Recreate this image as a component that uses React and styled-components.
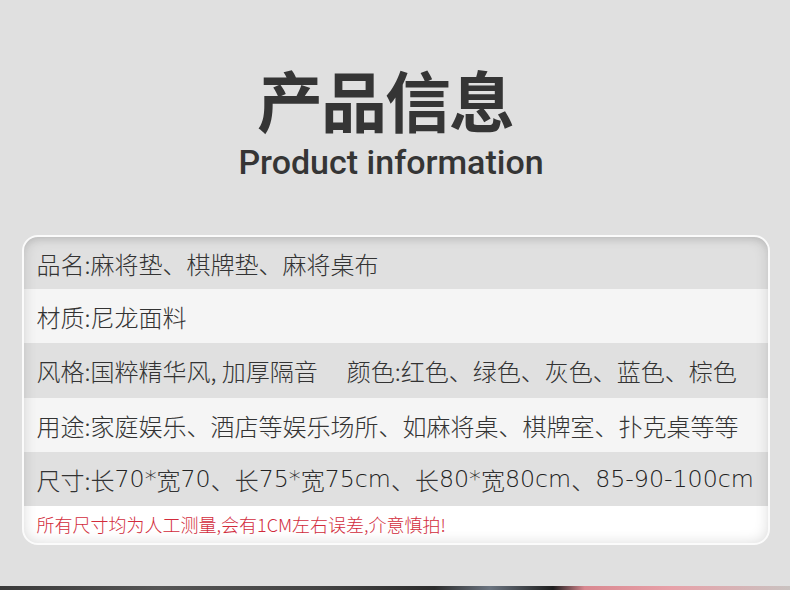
import styled, { createGlobalStyle } from 'styled-components'

const GlobalStyle = createGlobalStyle`
    html, body {
        margin: 0;
        padding: 0;
        background: #e0e0e0;
    }
`

const Page = styled.div`
    width: 790px;
    height: 590px;
    background: #e0e0e0;
    display: flex;
    flex-direction: column;
    align-items: center;
    overflow: hidden;
    font-family: "Noto Sans CJK SC", "Liberation Sans", sans-serif;
`

const Header = styled.header`
    display: flex;
    flex-direction: column;
    align-items: center;
    padding-top: 61px;
    height: 235px;
    flex-shrink: 0;
    box-sizing: border-box;
    width: 100%;
    margin-left: -8px;
`

const Title = styled.h1`
    margin: 0 12px 0 0;
    font-size: 66px;
    line-height: 74px;
    font-weight: 700;
    color: #353535;
    letter-spacing: -2px;
`

const Subtitle = styled.div`
    font-family: Roboto, "Liberation Sans", sans-serif;
    font-size: 34px;
    font-weight: 500;
    line-height: 36px;
    color: #353535;
    margin-top: 9px;
`

const Card = styled.section`
    position: relative;
    width: 748px;
    margin-left: 1px;
    border: 2px solid #fbfbfb;
    border-radius: 16px;
    overflow: hidden;
    box-sizing: border-box;
    &::after {
        content: '';
        position: absolute;
        inset: 0;
        border-radius: 14px;
        pointer-events: none;
        box-shadow: inset 0 0 14px rgba(0, 0, 0, 0.14), inset 0 6px 10px -6px rgba(0, 0, 0, 0.12);
    }
`

const Row = styled.div`
    display: flex;
    align-items: center;
    height: ${props => props.h}px;
    padding-left: 13px;
    background: ${props => props.bg};
    color: #333;
    font-size: 24px;
    font-weight: 300;
    white-space: nowrap;
`

const Latin = styled.span`
    font-family: "DejaVu Sans", "Liberation Sans", sans-serif;
    font-weight: 200;
    font-size: 23.7px;
    color: #222;
`

const Note = styled(Row)`
    color: #d22c3c;
    font-size: 18px;
    font-weight: 300;
    padding-bottom: 2px;
`

const Gap = styled.span`
    display: inline-block;
    width: ${props => props.w}px;
`

const BottomStrip = styled.div`
    margin-top: auto;
    width: 100%;
    height: 4px;
    background: linear-gradient(90deg, #3a3a3a 0%, #555 20%, #444 40%, #2c2c2c 55%, #6b7480 62%, #1e1e1e 70%, #d98890 74%, #e8a0a8 85%, #c9c2c0 100%);
`

// split digits/latin out so they can use a wider face
const mixed = s =>
    s.split(/([0-9A-Za-z*\-]+)/).map((part, i) =>
        /[0-9A-Za-z]/.test(part) ? <Latin key={i}>{part}</Latin> : part
    )

const rows = [
    { h: 52, bg: '#e0e0e0', text: '品名:麻将垫、棋牌垫、麻将桌布' },
    { h: 54, bg: '#f5f5f5', text: '材质:尼龙面料' },
    { h: 55, bg: '#e0e0e0', text: '风格:国粹精华风, 加厚隔音', extra: '颜色:红色、绿色、灰色、蓝色、棕色' },
    { h: 54, bg: '#f5f5f5', text: '用途:家庭娱乐、酒店等娱乐场所、如麻将桌、棋牌室、扑克桌等等' },
    { h: 54, bg: '#e0e0e0', text: '尺寸:长70*宽70、长75*宽75cm、长80*宽80cm、85-90-100cm' },
]

const App = () => {
    return (
        <Page>
            <GlobalStyle />
            <Header>
                <Title>产品信息</Title>
                <Subtitle>Product information</Subtitle>
            </Header>
            <Card>
                {rows.map((r, i) => (
                    <Row key={i} h={r.h} bg={r.bg}>
                        {mixed(r.text)}
                        {r.extra && <><Gap w={29} />{r.extra}</>}
                    </Row>
                ))}
                <Note h={35} bg="#ffffff">所有尺寸均为人工测量,会有1CM左右误差,介意慎拍!</Note>
            </Card>
            <BottomStrip />
        </Page>
    )
}

export default App
